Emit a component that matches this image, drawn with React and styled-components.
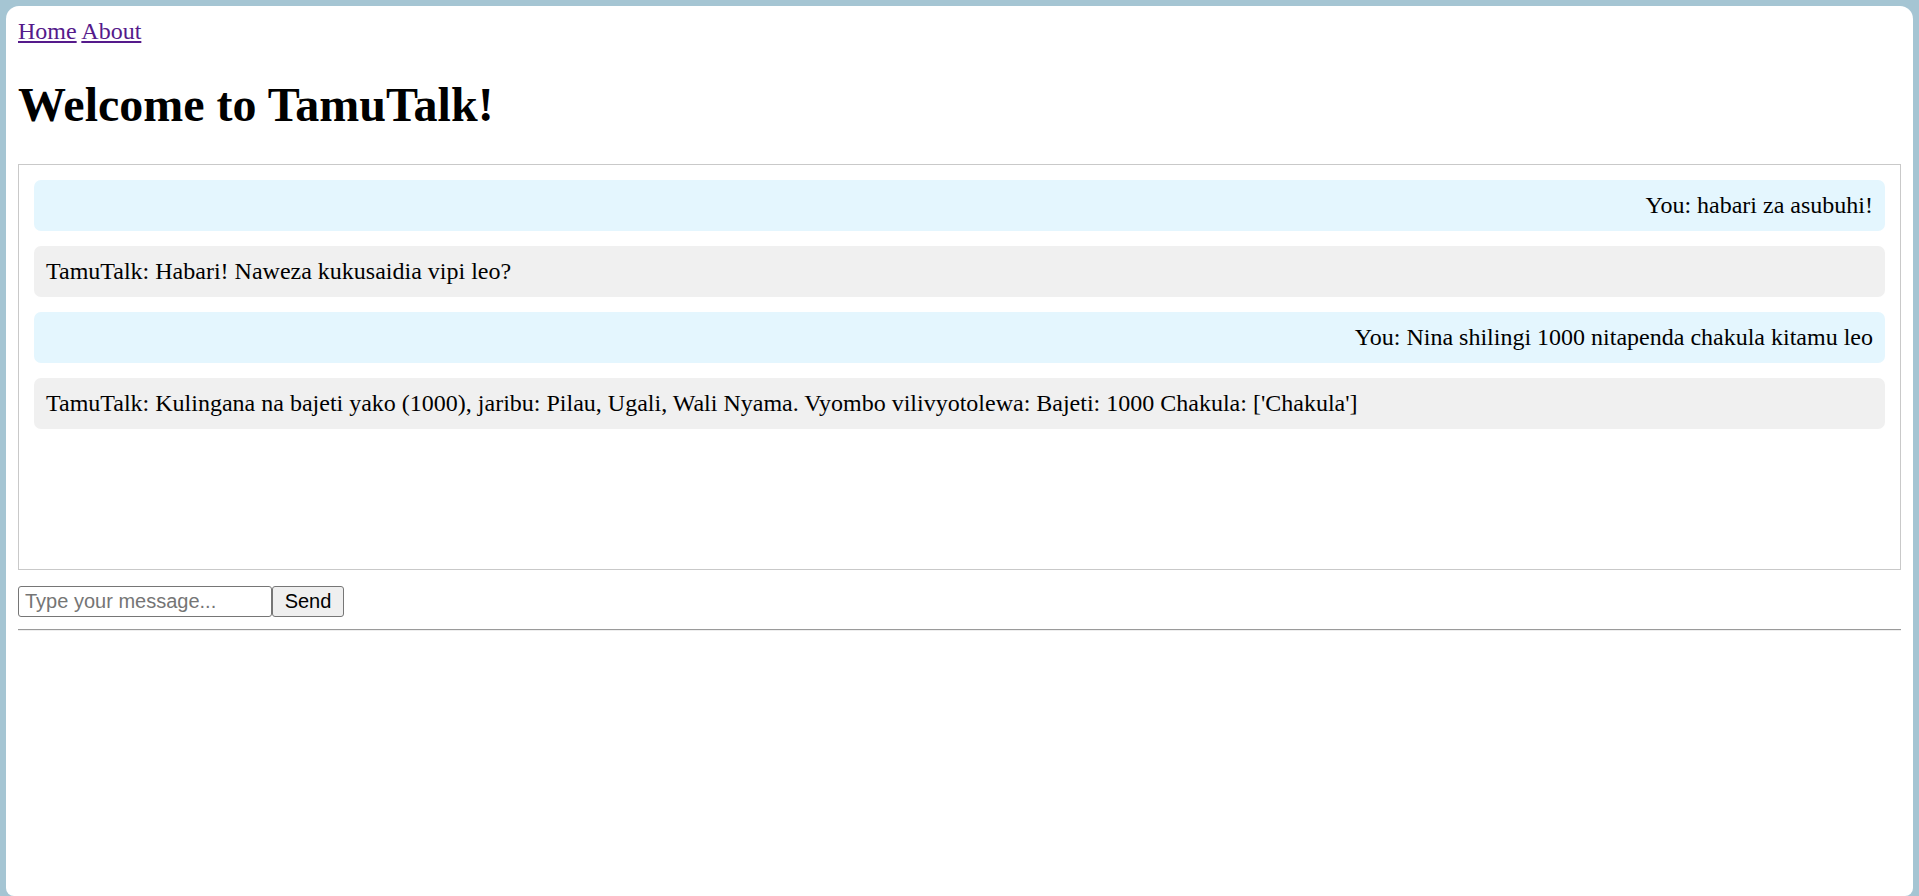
import styled, { createGlobalStyle } from "styled-components";

const GlobalStyle = createGlobalStyle`
  html, body {
    margin: 0;
    padding: 0;
    height: 100%;
  }
  body {
    background: #a5c5d3;
    overflow: hidden;
  }
`;

const messages = [
  { from: "user", text: "You: habari za asubuhi!" },
  { from: "bot", text: "TamuTalk: Habari! Naweza kukusaidia vipi leo?" },
  { from: "user", text: "You: Nina shilingi 1000 nitapenda chakula kitamu leo" },
  {
    from: "bot",
    text: "TamuTalk: Kulingana na bajeti yako (1000), jaribu: Pilau, Ugali, Wali Nyama. Vyombo vilivyotolewa: Bajeti: 1000 Chakula: ['Chakula']",
  },
];

export default function App() {
  return (
    <>
      <GlobalStyle />
      <Page>
        <Nav>
          <NavLink href="#">Home</NavLink> <NavLink href="#">About</NavLink>
        </Nav>
        <Title>Welcome to TamuTalk!</Title>
        <ChatBox>
          {messages.map((m, i) => (
            <Bubble key={i} $user={m.from === "user"}>
              {m.text}
            </Bubble>
          ))}
        </ChatBox>
        <InputRow>
          <MessageInput type="text" placeholder="Type your message..." />
          <SendButton>Send</SendButton>
        </InputRow>
        <Rule />
      </Page>
    </>
  );
}

const Page = styled.div`
  margin: 6px 6px 0;
  height: 890px;
  box-sizing: border-box;
  padding: 12px;
  background: #fff;
  border-radius: 13px 13px 8px 8px;
  font-family: "Liberation Serif", "Times New Roman", serif;
  color: #000;
`;

const Nav = styled.nav`
  font-size: 24px;
  line-height: 27.6px;
`;

const NavLink = styled.a`
  color: #551a8b;
  text-decoration: underline;
`;

const Title = styled.h1`
  margin: 32px 0;
  font-size: 48px;
  font-weight: bold;
  line-height: 54px;
`;

const ChatBox = styled.div`
  height: 406px;
  box-sizing: border-box;
  border: 1px solid #c9c9c9;
  padding: 15px;
  overflow-y: auto;
  display: flex;
  flex-direction: column;
  gap: 15px;
`;

const Bubble = styled.div`
  padding: 12px;
  border-radius: 7px;
  font-size: 24px;
  line-height: 27px;
  background: ${({ $user }) => ($user ? "#e4f6fe" : "#f0f0f0")};
  text-align: ${({ $user }) => ($user ? "right" : "left")};
`;

const InputRow = styled.div`
  display: flex;
  margin-top: 16px;
`;

const MessageInput = styled.input`
  width: 254px;
  height: 31px;
  box-sizing: border-box;
  padding: 1px 6px;
  border: 1.5px solid #767676;
  border-radius: 3px;
  font-family: "Liberation Sans", Arial, sans-serif;
  font-size: 20px;
  outline: none;

  &::placeholder {
    color: #757575;
  }
`;

const SendButton = styled.button`
  width: 72px;
  height: 31px;
  box-sizing: border-box;
  padding: 1px 9px;
  border: 1.5px solid #767676;
  border-radius: 3px;
  background: #efefef;
  font-family: "Liberation Sans", Arial, sans-serif;
  font-size: 20px;
  color: #000;
`;

const Rule = styled.hr`
  margin: 12px 0 0;
  border: none;
  border-top: 1.5px solid #9a9a9a;
  border-bottom: 1px solid #eeeeee;
`;
